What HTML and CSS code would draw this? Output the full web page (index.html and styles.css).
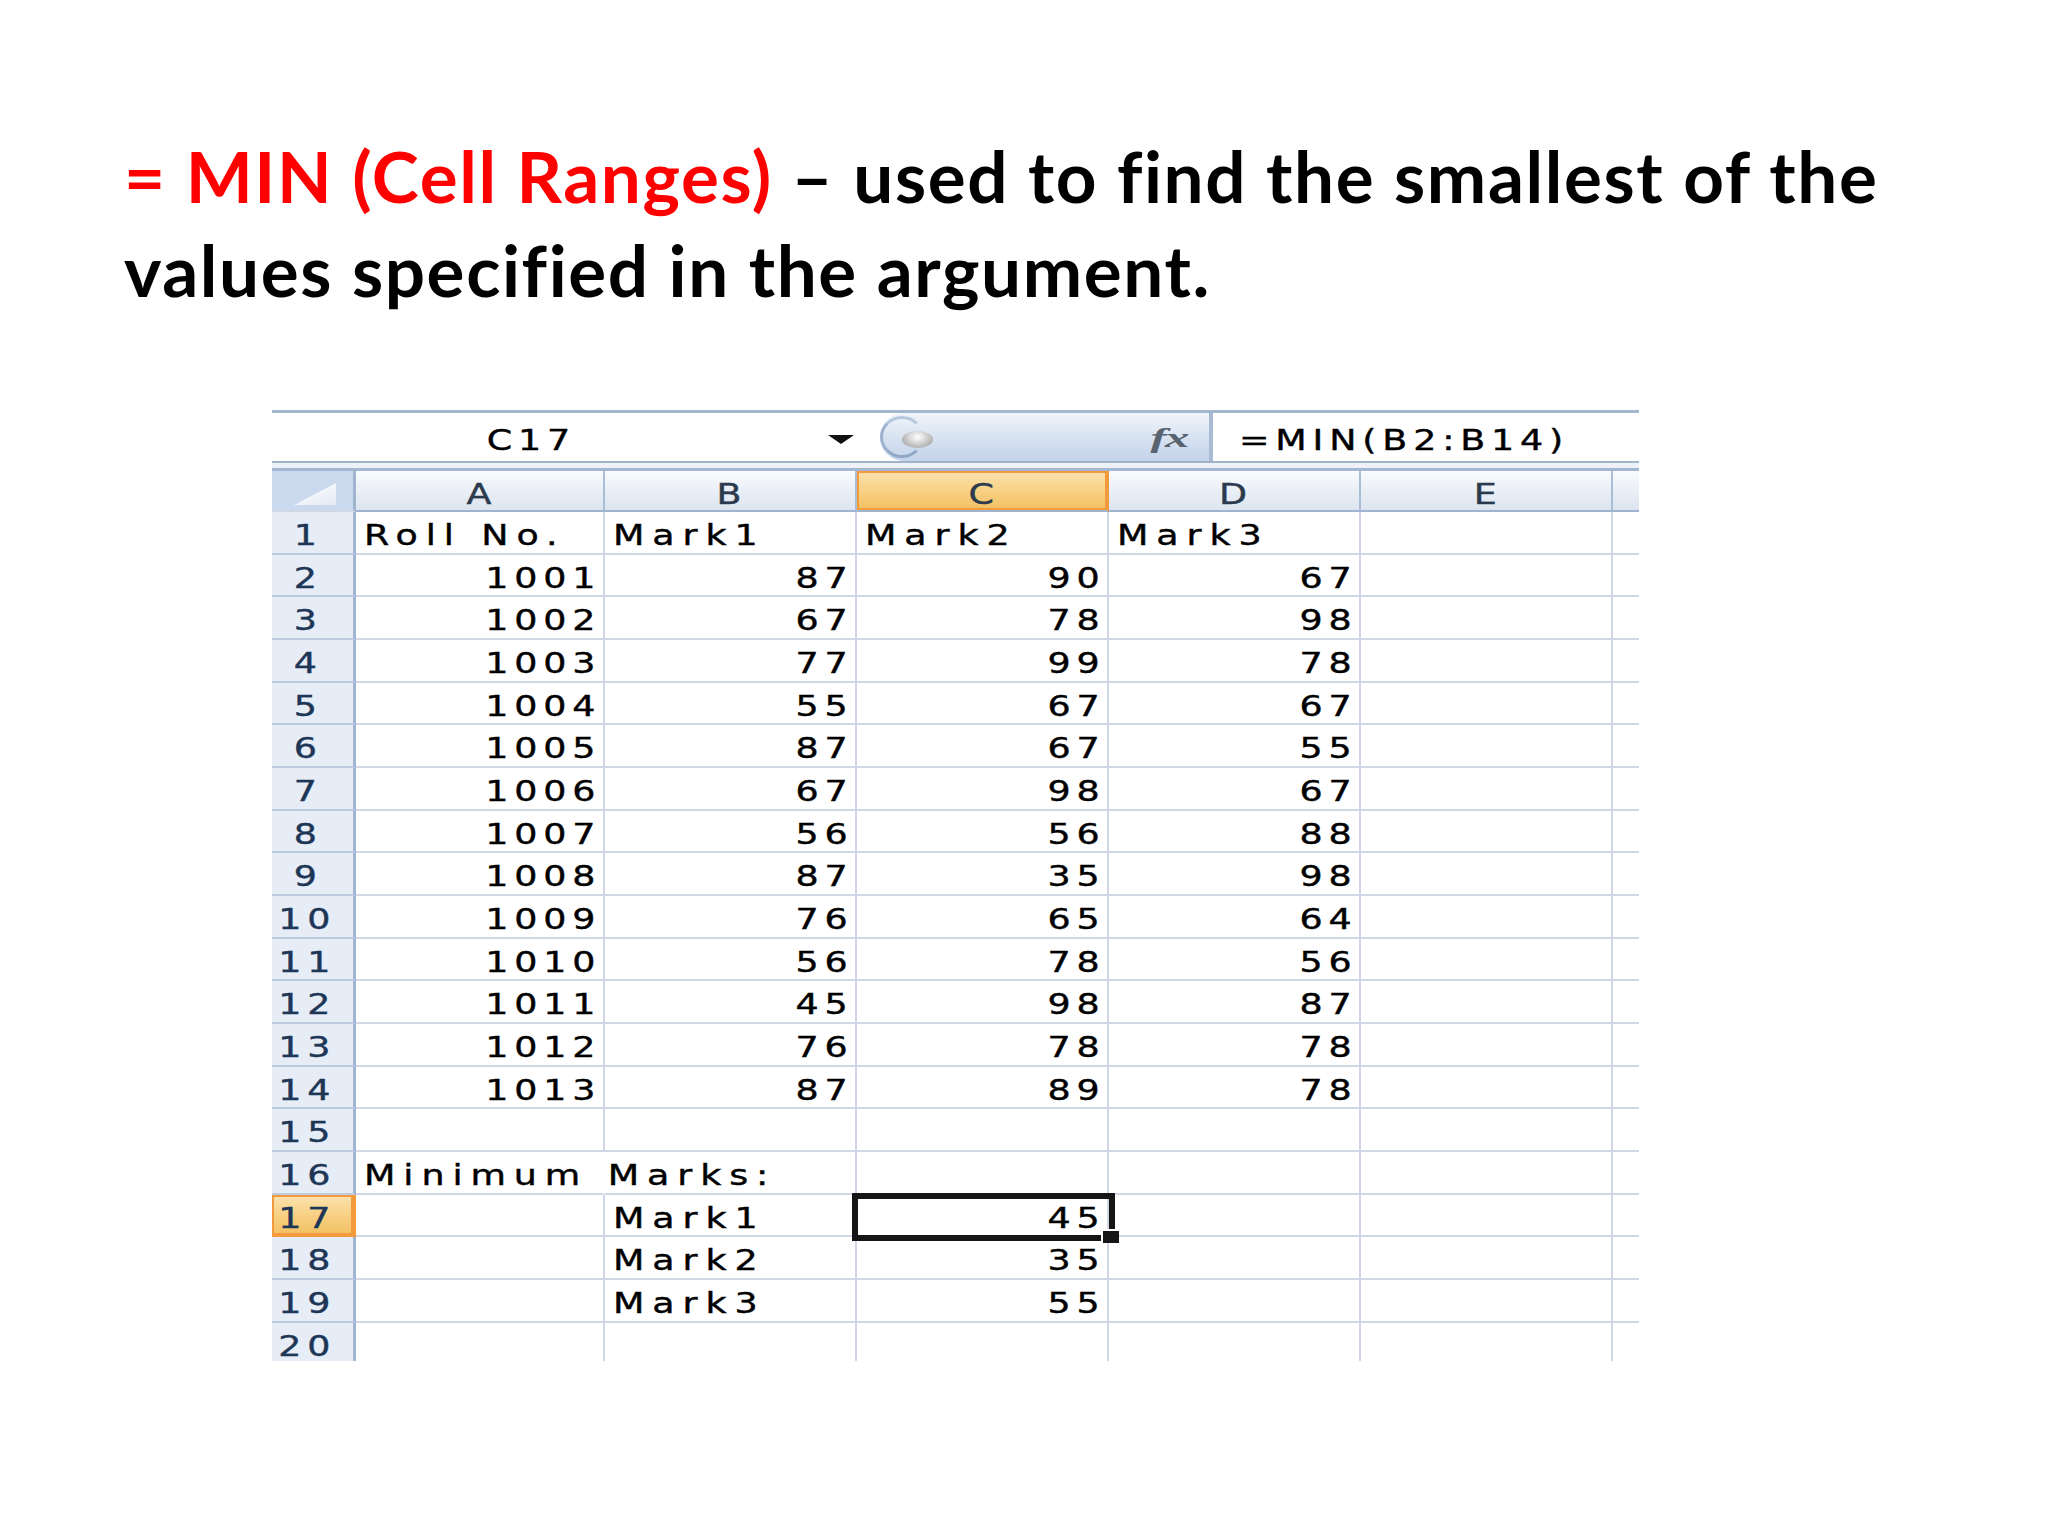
FILE: index.html
```html
<!DOCTYPE html>
<html>
<head>
<meta charset="utf-8">
<title>MIN function</title>
<link rel="stylesheet" href="styles.css">
</head>
<body>
<div class="slide">
  <h1 class="title"><span class="red">= MIN (Cell Ranges)</span> – used to find the smallest of the<br>values specified in the argument.</h1>
  <div class="sheet">
    <div class="fbar">
      <div class="namebox"><span class="t">C17</span></div>
      <div class="drop"><span class="arrow"></span></div>
      <div class="pill"><span class="ring"></span><span class="knob"></span><span class="fx">fx</span></div>
      <div class="formula"><span class="t">=MIN(B2:B14)</span></div>
    </div>
    <div class="fgap"></div>
    <div class="grid">
      <div class="c corner"></div><div class="c ch"><span class="t">A</span></div><div class="c ch"><span class="t">B</span></div><div class="c ch hl"><span class="t">C</span></div><div class="c ch"><span class="t">D</span></div><div class="c ch"><span class="t">E</span></div><div class="c ch f"></div>

      <div class="c rh"><span class="t">1</span></div><div class="c"><span class="t w">Roll No.</span></div><div class="c"><span class="t w">Mark1</span></div><div class="c"><span class="t w">Mark2</span></div><div class="c"><span class="t w">Mark3</span></div><div class="c"></div><div class="c f"></div>
      <div class="c rh"><span class="t">2</span></div><div class="c r"><span class="t">1001</span></div><div class="c r"><span class="t">87</span></div><div class="c r"><span class="t">90</span></div><div class="c r"><span class="t">67</span></div><div class="c"></div><div class="c f"></div>
      <div class="c rh"><span class="t">3</span></div><div class="c r"><span class="t">1002</span></div><div class="c r"><span class="t">67</span></div><div class="c r"><span class="t">78</span></div><div class="c r"><span class="t">98</span></div><div class="c"></div><div class="c f"></div>
      <div class="c rh"><span class="t">4</span></div><div class="c r"><span class="t">1003</span></div><div class="c r"><span class="t">77</span></div><div class="c r"><span class="t">99</span></div><div class="c r"><span class="t">78</span></div><div class="c"></div><div class="c f"></div>
      <div class="c rh"><span class="t">5</span></div><div class="c r"><span class="t">1004</span></div><div class="c r"><span class="t">55</span></div><div class="c r"><span class="t">67</span></div><div class="c r"><span class="t">67</span></div><div class="c"></div><div class="c f"></div>
      <div class="c rh"><span class="t">6</span></div><div class="c r"><span class="t">1005</span></div><div class="c r"><span class="t">87</span></div><div class="c r"><span class="t">67</span></div><div class="c r"><span class="t">55</span></div><div class="c"></div><div class="c f"></div>
      <div class="c rh"><span class="t">7</span></div><div class="c r"><span class="t">1006</span></div><div class="c r"><span class="t">67</span></div><div class="c r"><span class="t">98</span></div><div class="c r"><span class="t">67</span></div><div class="c"></div><div class="c f"></div>
      <div class="c rh"><span class="t">8</span></div><div class="c r"><span class="t">1007</span></div><div class="c r"><span class="t">56</span></div><div class="c r"><span class="t">56</span></div><div class="c r"><span class="t">88</span></div><div class="c"></div><div class="c f"></div>
      <div class="c rh"><span class="t">9</span></div><div class="c r"><span class="t">1008</span></div><div class="c r"><span class="t">87</span></div><div class="c r"><span class="t">35</span></div><div class="c r"><span class="t">98</span></div><div class="c"></div><div class="c f"></div>
      <div class="c rh"><span class="t">10</span></div><div class="c r"><span class="t">1009</span></div><div class="c r"><span class="t">76</span></div><div class="c r"><span class="t">65</span></div><div class="c r"><span class="t">64</span></div><div class="c"></div><div class="c f"></div>
      <div class="c rh"><span class="t">11</span></div><div class="c r"><span class="t">1010</span></div><div class="c r"><span class="t">56</span></div><div class="c r"><span class="t">78</span></div><div class="c r"><span class="t">56</span></div><div class="c"></div><div class="c f"></div>
      <div class="c rh"><span class="t">12</span></div><div class="c r"><span class="t">1011</span></div><div class="c r"><span class="t">45</span></div><div class="c r"><span class="t">98</span></div><div class="c r"><span class="t">87</span></div><div class="c"></div><div class="c f"></div>
      <div class="c rh"><span class="t">13</span></div><div class="c r"><span class="t">1012</span></div><div class="c r"><span class="t">76</span></div><div class="c r"><span class="t">78</span></div><div class="c r"><span class="t">78</span></div><div class="c"></div><div class="c f"></div>
      <div class="c rh"><span class="t">14</span></div><div class="c r"><span class="t">1013</span></div><div class="c r"><span class="t">87</span></div><div class="c r"><span class="t">89</span></div><div class="c r"><span class="t">78</span></div><div class="c"></div><div class="c f"></div>
      <div class="c rh"><span class="t">15</span></div><div class="c"></div><div class="c"></div><div class="c"></div><div class="c"></div><div class="c"></div><div class="c f"></div>
      <div class="c rh"><span class="t">16</span></div><div class="c nb"><span class="t w">Minimum Marks:</span></div><div class="c"></div><div class="c"></div><div class="c"></div><div class="c"></div><div class="c f"></div>
      <div class="c rh hl"><span class="t">17</span></div><div class="c"></div><div class="c"><span class="t w">Mark1</span></div><div class="c r sel"><span class="t">45</span></div><div class="c"></div><div class="c"></div><div class="c f"></div>
      <div class="c rh"><span class="t">18</span></div><div class="c"></div><div class="c"><span class="t w">Mark2</span></div><div class="c r"><span class="t">35</span></div><div class="c"></div><div class="c"></div><div class="c f"></div>
      <div class="c rh"><span class="t">19</span></div><div class="c"></div><div class="c"><span class="t w">Mark3</span></div><div class="c r"><span class="t">55</span></div><div class="c"></div><div class="c"></div><div class="c f"></div>
      <div class="c rh last"><span class="t">20</span></div><div class="c last"></div><div class="c last"></div><div class="c last"></div><div class="c last"></div><div class="c last"></div><div class="c f last"></div>
    </div>
  </div>
</div>
</body>
</html>
```

FILE: styles.css
```css
html, body {
  margin: 0;
  background: #ffffff;
}

.slide {
  padding: 129px 0 0 124px;
}

.title {
  margin: 0;
  font: 700 71px/94px Lato, "Open Sans", sans-serif;
  letter-spacing: 1.6px;
  color: #000000;
  white-space: nowrap;
}

.red {
  color: #ff0000;
}

.sheet {
  margin: 93px 0 0 148px;
  width: 1367px;
  font-family: "DejaVu Sans", sans-serif;
  font-size: 28px;
  color: #000;
}

.t {
  display: inline-block;
  letter-spacing: 4.5px;
  line-height: 34px;
  transform: scaleX(1.3);
  transform-origin: left center;
  white-space: nowrap;
  -webkit-text-stroke: 0.4px currentColor;
}

.t.w {
  letter-spacing: 6.1px;
}

/* formula bar */
.fbar {
  box-sizing: border-box;
  height: 53px;
  display: flex;
  border-top: 3px solid #a3b7cf;
  border-bottom: 2px solid #9fb3cb;
  background: #fff;
}

.namebox {
  width: 514px;
  display: flex;
  align-items: center;
  justify-content: center;
  padding-top: 8px;
}

.namebox .t {
  transform-origin: center;
  margin-right: -4.5px;
}

.drop {
  box-sizing: border-box;
  width: 82px;
  padding-left: 42px;
  display: flex;
  align-items: center;
}

.arrow {
  width: 0;
  height: 0;
  border-left: 13px solid transparent;
  border-right: 13px solid transparent;
  border-top: 9px solid #111;
  margin-top: 4px;
}

.pill {
  box-sizing: border-box;
  position: relative;
  margin-left: 12px;
  width: 329px;
  display: flex;
  align-items: center;
  border-radius: 24px 0 0 24px;
  background: linear-gradient(#f0f5fb, #d6e1f0 55%, #c3d3ea);
}

.ring {
  position: absolute;
  left: 0;
  top: 3px;
  width: 44px;
  height: 42px;
  box-sizing: border-box;
  border-radius: 50%;
  border: 3px solid #9db2ce;
  border-right-color: transparent;
  border-top-color: #b6c7de;
  border-bottom-color: #8fa6c5;
}

.knob {
  margin-left: 22px;
  margin-top: 4px;
  width: 31px;
  height: 17px;
  border-radius: 50%;
  background: radial-gradient(ellipse at 50% 35%, #ffffff 0%, #dadada 35%, #a8a8a8 80%, #8e8e8e 100%);
}

.fx {
  margin-left: auto;
  margin-right: 22px;
  margin-top: 2px;
  font-family: "Liberation Serif", serif;
  font-style: italic;
  font-weight: 700;
  font-size: 27px;
  letter-spacing: -1px;
  color: #59636f;
  transform: scaleX(1.8);
  transform-origin: right center;
}

.formula {
  flex: 1;
  display: flex;
  align-items: center;
  padding-left: 26px;
  padding-top: 8px;
  border-left: 4px solid #a8bbd3;
}

.fgap {
  height: 5px;
  background: #eef2f8;
}

/* grid */
.grid {
  display: grid;
  grid-template-columns: 84px 249px 252px 252px 252px 252px 26px;
  grid-template-rows: 41px repeat(19, 42.68px) 38px;
  border-top: 3px solid #a3b8d0;
}

.c {
  box-sizing: border-box;
  border-right: 2px solid #d0d7e5;
  border-bottom: 2px solid #d0d7e5;
  padding: 7px 8px 0 8px;
  white-space: nowrap;
  min-width: 0;
}

.r {
  text-align: right;
  padding-right: 6px;
}

.r .t {
  transform-origin: right center;
  margin-right: -4.5px;
}

.nb {
  border-right-color: transparent;
}

.f {
  border-right: none;
}

.last {
  border-bottom: none;
}

.rh {
  background: #e6edf7;
  border-right: 3px solid #9fb5cf;
  border-bottom-color: #bccbdf;
  text-align: center;
  padding: 7px 18px 0 4px;
  color: #1d3656;
}

.rh .t,
.ch .t {
  transform-origin: center;
  margin-right: -4.5px;
}

.ch {
  background: linear-gradient(#f9fbfd, #e7edf5 60%, #dce5f0);
  border-right-color: #a9bdd4;
  border-bottom: 2px solid #9fb5cf;
  text-align: center;
  color: #2c3a4e;
  padding-top: 7px;
}

.corner {
  position: relative;
  background: #cad9ed;
  border-right: 3px solid #9fb5cf;
}

.corner::after {
  content: "";
  position: absolute;
  right: 17px;
  bottom: 5px;
  width: 42px;
  height: 22px;
  background: linear-gradient(160deg, #ffffff, #e4ebf5);
  clip-path: polygon(100% 0, 100% 100%, 0 100%);
}

.hl {
  background: linear-gradient(#fbe3b1, #f7cf80 55%, #f3c062);
  box-shadow: inset 0 0 0 2px #f29a3c;
  border-right-color: #f29a3c;
}

.rh.hl {
  border-bottom-color: #f29a3c;
}

.sel {
  position: relative;
}

.sel::before {
  content: "";
  position: absolute;
  left: -5px;
  top: -2px;
  right: -8px;
  bottom: -6px;
  border: 6px solid #161616;
}

.sel::after {
  content: "";
  position: absolute;
  right: -12px;
  bottom: -8px;
  width: 16px;
  height: 12px;
  background: #161616;
  box-shadow: -2px -2px 0 #ffffff;
}
```
